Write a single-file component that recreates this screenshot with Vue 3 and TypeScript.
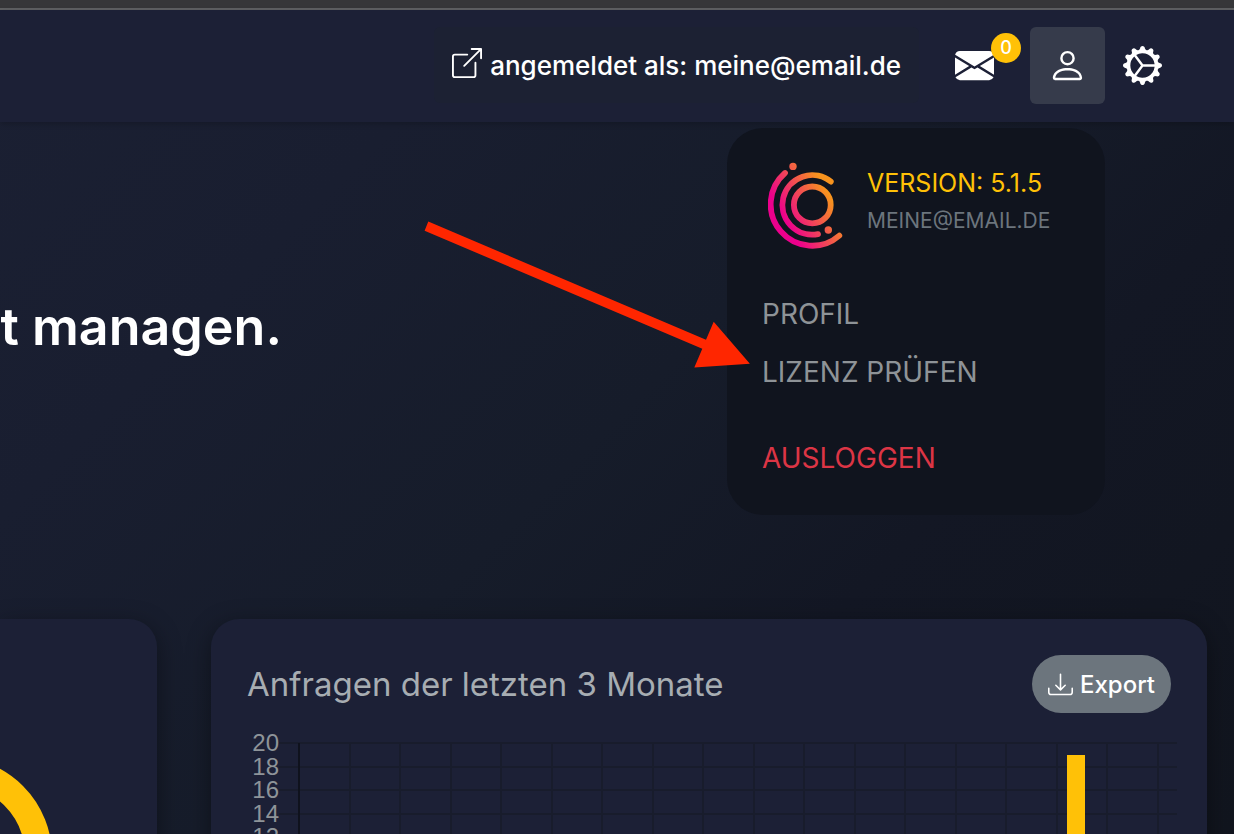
<script setup lang="ts">
interface MenuEntry {
  label: string
  kind: 'normal' | 'danger'
}

const entries: MenuEntry[] = [
  { label: 'Profil', kind: 'normal' },
  { label: 'Lizenz prüfen', kind: 'normal' },
  { label: 'Ausloggen', kind: 'danger' },
]

const ticks = [20, 18, 16, 14, 12].map((value, i) => ({ value, y: 14 + Math.round(i * 23.6) }))
const columns = Array.from({ length: 17 }, (_, i) => 52 + Math.round((i + 1) * 50.5))
</script>

<template>
  <div class="page">
    <div class="chrome"></div>
    <header class="bar">
      <a class="account" href="#">
        <svg class="icon-link" viewBox="0 0 16 16" fill="currentColor" aria-hidden="true">
          <path d="M8.636 3.5a.5.5 0 0 0-.5-.5H1.5A1.5 1.5 0 0 0 0 4.5v10A1.5 1.5 0 0 0 1.5 16h10a1.5 1.5 0 0 0 1.5-1.5V7.864a.5.5 0 0 0-1 0V14.5a.5.5 0 0 1-.5.5h-10a.5.5 0 0 1-.5-.5v-10a.5.5 0 0 1 .5-.5h6.636a.5.5 0 0 0 .5-.5z" />
          <path d="M16 .5a.5.5 0 0 0-.5-.5h-5a.5.5 0 0 0 0 1h3.793L6.146 9.146a.5.5 0 1 0 .708.708L15 1.707V5.5a.5.5 0 0 0 1 0v-5z" />
        </svg>
        <span>angemeldet als: meine@email.de</span>
      </a>
      <button class="tool mail" type="button" aria-label="Nachrichten">
        <svg class="icon" viewBox="0 0 16 16" fill="currentColor" aria-hidden="true">
          <path d="M.05 3.555A2 2 0 0 1 2 2h12a2 2 0 0 1 1.95 1.555L8 8.414.05 3.555ZM0 4.697v7.104l5.803-3.558L0 4.697ZM6.761 8.83l-6.57 4.027A2 2 0 0 0 2 14h12a2 2 0 0 0 1.808-1.144l-6.57-4.027L8 9.586l-1.239-.757Zm3.436-.586L16 11.801V4.697l-5.803 3.546Z" />
        </svg>
        <span class="badge">0</span>
      </button>
      <div class="user">
        <button class="tool active" type="button" aria-label="Benutzer" aria-expanded="true">
          <svg class="icon" viewBox="0 0 16 16" fill="currentColor" aria-hidden="true">
            <path d="M8 8a3 3 0 1 0 0-6 3 3 0 0 0 0 6Zm2-3a2 2 0 1 1-4 0 2 2 0 0 1 4 0Zm4 8c0 1-1 1-1 1H3s-1 0-1-1 1-4 6-4 6 3 6 4Zm-1-.004c-.001-.246-.154-.986-.832-1.664C11.516 10.68 10.289 10 8 10c-2.29 0-3.516.68-4.168 1.332-.678.678-.83 1.418-.832 1.664h10Z" />
          </svg>
        </button>
        <div class="dropdown">
          <div class="profile">
            <svg class="logo" viewBox="768 162 76 88" fill="none" stroke="url(#brand)" stroke-width="5.8" stroke-linecap="round" aria-hidden="true">
              <defs>
                <linearGradient id="brand" gradientUnits="userSpaceOnUse" x1="785" y1="220" x2="829" y2="195">
                  <stop offset="0" stop-color="#ec008c" />
                  <stop offset="1" stop-color="#f7931e" />
                </linearGradient>
              </defs>
              <circle cx="812.3" cy="204.9" r="18.4" />
              <path d="M830.8 181.6A29.8 29.8 0 1 0 818 234.1" />
              <path d="M785 173A41.3 41.3 0 1 0 839.3 235.6" />
              <g fill="url(#brand)" stroke="none">
                <circle cx="793" cy="166.4" r="3.7" />
                <circle cx="828.3" cy="230" r="3.7" />
              </g>
            </svg>
            <div class="who">
              <strong class="version">Version: 5.1.5</strong>
              <span class="mailaddr">meine@email.de</span>
            </div>
          </div>
          <nav class="menu">
            <a v-for="entry in entries" :key="entry.label" href="#" :class="['entry', entry.kind]">{{ entry.label }}</a>
          </nav>
        </div>
      </div>
      <button class="tool" type="button" aria-label="Einstellungen">
        <svg class="icon" viewBox="0 0 16 16" fill="currentColor" aria-hidden="true">
          <path d="M7.068.727c.243-.97 1.62-.97 1.864 0l.071.286a.96.96 0 0 0 1.622.434l.205-.211c.695-.719 1.888-.03 1.613.931l-.08.284a.96.96 0 0 0 1.187 1.187l.283-.081c.96-.275 1.65.918.931 1.613l-.211.205a.96.96 0 0 0 .434 1.622l.286.071c.97.243.97 1.62 0 1.864l-.286.071a.96.96 0 0 0-.434 1.622l.211.205c.719.695.03 1.888-.931 1.613l-.284-.08a.96.96 0 0 0-1.187 1.187l.081.283c.275.96-.918 1.65-1.613.931l-.205-.211a.96.96 0 0 0-1.622.434l-.071.286c-.243.97-1.62.97-1.864 0l-.071-.286a.96.96 0 0 0-1.622-.434l-.205.211c-.695.719-1.888.03-1.613-.931l.08-.284a.96.96 0 0 0-1.186-1.187l-.284.081c-.96.275-1.65-.918-.931-1.613l.211-.205a.96.96 0 0 0-.434-1.622l-.286-.071c-.97-.243-.97-1.62 0-1.864l.286-.071a.96.96 0 0 0 .434-1.622l-.211-.205c-.719-.695-.03-1.888.931-1.613l.284.08a.96.96 0 0 0 1.187-1.186l-.081-.284c-.275-.96.918-1.65 1.613-.931l.205.211a.96.96 0 0 0 1.622-.434l.071-.286zM12.973 8.5H8.25l-2.834 3.779A4.998 4.998 0 0 0 12.973 8.5zm0-1a4.998 4.998 0 0 0-7.557-3.779l2.834 3.78h4.723zM5.048 3.967c-.03.021-.058.043-.087.065l.087-.065zm-.431.355A4.984 4.984 0 0 0 3.002 8c0 1.455.622 2.765 1.615 3.678L7.375 8 4.617 4.322zm.344 7.646.087.065-.087-.065z" />
        </svg>
      </button>
    </header>

    <main class="content">
      <section class="hero">
        <h1>t managen.</h1>
      </section>
      <div class="cards">
        <section class="card side">
          <svg class="donut" viewBox="0 0 157 215" aria-hidden="true">
            <circle cx="-47" cy="237" r="85.5" fill="none" stroke="#ffc107" stroke-width="27" />
          </svg>
        </section>
        <section class="card">
          <div class="card-head">
            <h2>Anfragen der letzten 3 Monate</h2>
            <button class="export" type="button">
              <svg class="icon-export" viewBox="0 0 16 16" fill="currentColor" aria-hidden="true">
                <path d="M.5 9.9a.5.5 0 0 1 .5.5v2.5a1 1 0 0 0 1 1h12a1 1 0 0 0 1-1v-2.5a.5.5 0 0 1 1 0v2.5a2 2 0 0 1-2 2H2a2 2 0 0 1-2-2v-2.5a.5.5 0 0 1 .5-.5z" />
                <path d="M7.646 11.854a.5.5 0 0 0 .708 0l3-3a.5.5 0 0 0-.708-.708L8.5 10.293V1.5a.5.5 0 0 0-1 0v8.793L5.354 8.146a.5.5 0 1 0-.708.708l3 3z" />
              </svg>
              <span>Export</span>
            </button>
          </div>
          <div class="chart">
            <svg class="plot" viewBox="0 0 930 120" role="img" aria-label="Anfragen der letzten 3 Monate">
              <g stroke="#181c2c" stroke-width="2">
                <line v-for="t in ticks" :key="t.value" x1="32" x2="930" :y1="t.y" :y2="t.y" />
                <line v-for="x in columns" :key="x" :x1="x" :x2="x" y1="14" y2="120" />
              </g>
              <line x1="52" x2="52" y1="14" y2="120" stroke="#0f121d" stroke-width="2" />
              <g class="labels">
                <text v-for="t in ticks" :key="t.value" x="32" :y="t.y + 8">{{ t.value }}</text>
              </g>
              <rect x="820" y="26" width="18" height="94" fill="#ffc107" />
            </svg>
          </div>
        </section>
      </div>
    </main>

    <svg class="pointer" viewBox="424 221 326 147" aria-hidden="true">
      <path fill="#ff2600" d="M428.3 221.5L706 339.7 713.7 321.7 749.9 363.7 694.3 367.4 702.3 348.8 424.6 230.7Z" />
    </svg>
  </div>
</template>

<style>
body {
  margin: 0;
  background: #151a28;
}
</style>

<style scoped>
.page {
  position: relative;
  display: flex;
  flex-direction: column;
  height: 100vh;
  overflow: hidden;
  font-family: Inter, "Liberation Sans", sans-serif;
  color: #fff;
  background: linear-gradient(135deg, #1b2033 0%, #191e30 25%, #161c2a 50%, #131724 70%, #11151e 100%);
}
a {
  color: inherit;
  text-decoration: none;
}
button {
  border: 0;
  padding: 0;
  background: none;
  color: inherit;
  font: inherit;
}
svg {
  display: block;
}
.chrome {
  flex: none;
  height: 8px;
  background: #363639;
  border-bottom: 2px solid #5f6063;
}
.bar {
  position: relative;
  z-index: 2;
  flex: none;
  display: flex;
  align-items: flex-start;
  justify-content: flex-end;
  box-sizing: border-box;
  height: 112px;
  padding: 17px 54px 0 0;
  background: #1c2036;
  box-shadow: 0 2px 6px rgba(0, 0, 0, 0.2);
}
.account {
  display: flex;
  align-items: center;
  gap: 8px;
  height: 76px;
  padding: 0 18px;
  margin-right: 18px;
  border-radius: 6px;
  background: #1c2133;
  font-size: 26px;
  font-weight: 500;
  white-space: nowrap;
}
.icon-link {
  width: 30px;
  height: 30px;
  margin-bottom: 4px;
}
.tool {
  position: relative;
  display: flex;
  align-items: center;
  justify-content: center;
  width: 75px;
  height: 77px;
  border-radius: 6px;
}
.mail {
  margin-right: 18px;
}
.active {
  background: #363b4b;
}
.icon {
  width: 39px;
  height: 39px;
}
.badge {
  position: absolute;
  top: 6px;
  right: -9px;
  width: 30px;
  border-radius: 15px;
  background: #ffc107;
  font-size: 18px;
  font-weight: 500;
  line-height: 30px;
  text-align: center;
}
.user {
  position: relative;
}
.dropdown {
  position: absolute;
  top: 101px;
  right: 0;
  box-sizing: border-box;
  width: 378px;
  padding: 34px 35px 28px;
  border-radius: 36px;
  background: #10141e;
  text-transform: uppercase;
}
.profile {
  display: flex;
  gap: 23px;
  padding-left: 6px;
}
.logo {
  flex: none;
  width: 76px;
  height: 88px;
}
.who {
  display: flex;
  flex-direction: column;
  padding-top: 2px;
  white-space: nowrap;
}
.version {
  color: #ffc107;
  font-size: 25px;
  font-weight: 400;
  line-height: 38px;
}
.mailaddr {
  color: #6c757d;
  font-size: 21px;
  line-height: 38px;
}
.menu {
  display: flex;
  flex-direction: column;
  padding-top: 35px;
}
.entry {
  color: #8e9397;
  font-size: 28px;
  line-height: 58px;
}
.danger {
  margin-top: 28px;
  color: #dc3545;
}
.content {
  flex: 1;
  display: flex;
  flex-direction: column;
}
.hero {
  display: flex;
  justify-content: flex-end;
  box-sizing: border-box;
  width: 282px;
  height: 497px;
  padding-top: 171px;
}
h1 {
  margin: 0;
  font-size: 52px;
  font-weight: 600;
  line-height: 68px;
  white-space: nowrap;
}
.cards {
  flex: 1;
  display: grid;
  grid-template-columns: 157px 1fr;
  gap: 54px;
  padding-right: 27px;
}
.card {
  border-radius: 28px 28px 0 0;
  background: #1c2036;
  box-shadow: 0 6px 24px rgba(0, 0, 0, 0.4);
}
.side {
  border-top-left-radius: 0;
}
.donut {
  width: 100%;
}
.card-head {
  display: flex;
  align-items: center;
  justify-content: space-between;
  padding: 36px 36px 0;
}
h2 {
  margin: 0;
  color: #a7adb2;
  font-size: 33px;
  font-weight: 400;
  line-height: 58px;
}
.export {
  display: flex;
  align-items: center;
  gap: 7px;
  height: 58px;
  padding: 0 16px;
  border-radius: 29px;
  background: #6c757d;
  font-size: 24px;
  font-weight: 500;
}
.icon-export {
  width: 25px;
  height: 25px;
}
.chart {
  padding: 16px 30px 0 36px;
}
.plot {
  width: 100%;
}
.labels {
  fill: #8e9499;
  font-family: "Liberation Sans", Arial, sans-serif;
  font-size: 24px;
  text-anchor: end;
}
.pointer {
  position: absolute;
  z-index: 3;
  top: 221px;
  left: 424px;
  width: 326px;
  height: 147px;
  pointer-events: none;
}
</style>
